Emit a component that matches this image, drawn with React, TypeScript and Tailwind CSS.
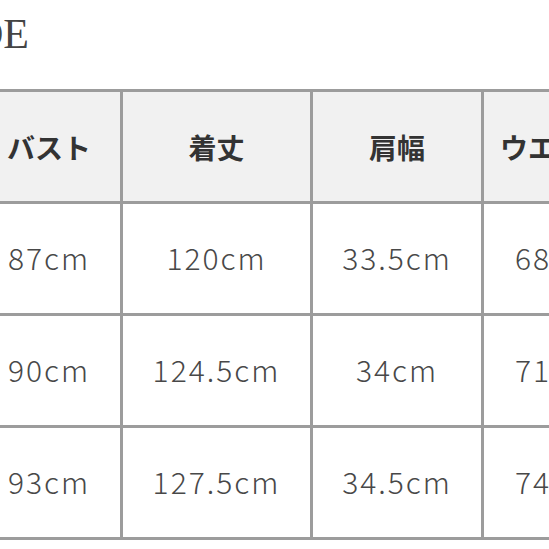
const headers = ['バスト', '着丈', '肩幅', 'ウエスト']

const rows = [
  ['87cm', '120cm', '33.5cm', '68cm'],
  ['90cm', '124.5cm', '34cm', '71cm'],
  ['93cm', '127.5cm', '34.5cm', '74cm'],
]

const jp = "font-['Noto_Sans_CJK_JP','Noto_Sans',sans-serif]"

export default function App() {
  return (
    <div className="w-[549px] h-[549px] overflow-hidden bg-white">
      {/* title, cut off on the left like the original crop */}
      <div className="h-[89px] pt-[13px]">
        <div className="w-[29px] flex justify-end overflow-hidden whitespace-nowrap">
          <span className="font-['Liberation_Serif',serif] text-[42px] leading-none text-[#444]">SIZE GUIDE</span>
        </div>
      </div>

      <div
        className={`-ml-[25px] w-[660px] grid grid-cols-[142px_187px_168px_144px] auto-rows-[109px] gap-[3px] p-[3px] bg-[#9c9c9c] ${jp}`}
      >
        {headers.map((h) => (
          <div
            key={h}
            className="bg-[#f1f1f1] flex items-center justify-center text-[28px] font-bold text-[#333] whitespace-nowrap"
          >
            {h}
          </div>
        ))}
        {rows.map((r, i) =>
          r.map((v, j) => (
            <div
              key={`${i}-${j}`}
              className="bg-white flex items-center justify-center pb-[3px] text-[30px] font-light tracking-[2px] text-[#484848] whitespace-nowrap"
            >
              {v}
            </div>
          )),
        )}
      </div>
    </div>
  )
}
